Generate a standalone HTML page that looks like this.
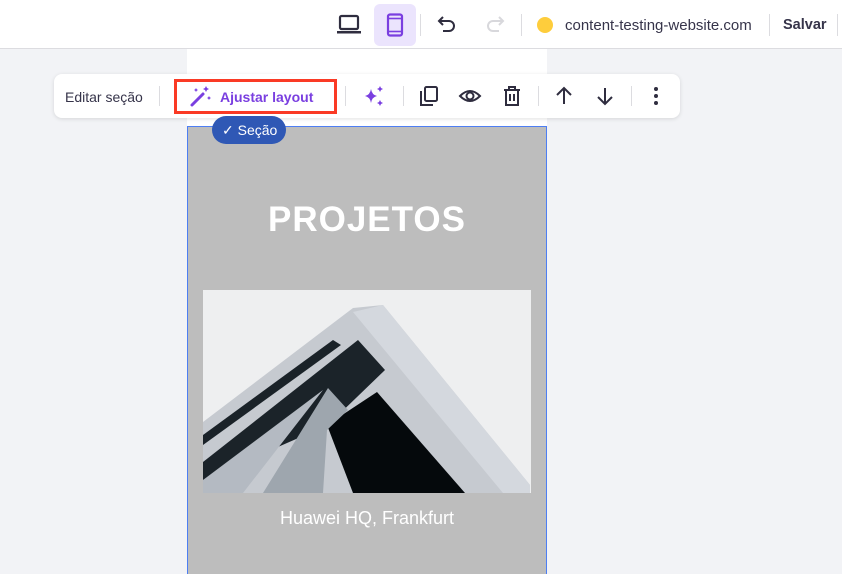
<!DOCTYPE html>
<html><head><meta charset="utf-8"><style>
*{margin:0;padding:0;box-sizing:border-box}
html,body{width:842px;height:574px;overflow:hidden}
body{background:#f2f3f6;font-family:"Liberation Sans",sans-serif;position:relative}
.top{position:absolute;left:0;top:0;width:842px;height:49px;background:#fff;border-bottom:1px solid #dcdce0}
.abs{position:absolute}
.sep{position:absolute;width:1px;background:#dcdce0}
.strip{position:absolute;left:187px;top:49px;width:360px;height:77px;background:#fff}
.section{position:absolute;left:187px;top:126px;width:360px;height:452px;background:#bdbdbd;border:1px solid #4d7ef3}
.tb{position:absolute;left:54px;top:74px;width:626px;height:44px;background:#fff;border-radius:8px;box-shadow:0 1px 4px rgba(0,0,0,.12)}
</style></head><body>
<div class="top">
  <svg class="abs" style="left:336px;top:14px" width="26" height="22" viewBox="0 0 26 22"><rect x="4" y="2" width="18" height="13" rx="1.5" fill="none" stroke="#2f2d3f" stroke-width="2.2"/><rect x="1" y="17" width="24" height="2.5" fill="#2f2d3f"/></svg>
  <div class="abs" style="left:374px;top:4px;width:42px;height:42px;background:#ebe4fd;border-radius:6px"></div>
  <svg class="abs" style="left:386px;top:13px" width="18" height="24" viewBox="0 0 18 24"><rect x="2" y="1.5" width="14" height="21" rx="2" fill="none" stroke="#7a3fe0" stroke-width="2.2"/><line x1="2" y1="5.5" x2="16" y2="5.5" stroke="#7a3fe0" stroke-width="1.6"/><line x1="2" y1="18.5" x2="16" y2="18.5" stroke="#7a3fe0" stroke-width="1.6"/></svg>
  <div class="sep" style="left:420px;top:14px;height:22px"></div>
  <svg class="abs" style="left:437px;top:15px" width="20" height="18" viewBox="0 0 20 18"><path d="M6 2 L2 6 L6 10 M2 6 H12 A5 5 0 0 1 12 16 H6" fill="none" stroke="#2f2d3f" stroke-width="2"/></svg>
  <svg class="abs" style="left:485px;top:15px" width="20" height="18" viewBox="0 0 20 18"><path d="M14 2 L18 6 L14 10 M18 6 H8 A5 5 0 0 0 8 16 H14" fill="none" stroke="#d8d8dc" stroke-width="2"/></svg>
  <div class="sep" style="left:521px;top:14px;height:22px"></div>
  <div class="abs" style="left:537px;top:17px;width:16px;height:16px;border-radius:50%;background:#fecd3c"></div>
  <div class="abs" style="left:565px;top:17px;font-size:15px;color:#36344a">content-testing-website.com</div>
  <div class="sep" style="left:769px;top:14px;height:22px"></div>
  <div class="abs" style="left:783px;top:17px;font-size:14.5px;font-weight:bold;color:#36344a">Salvar</div>
  <div class="sep" style="left:837px;top:14px;height:22px"></div>
</div>
<div class="strip"></div>
<div class="section">
  <div class="abs" style="left:0;top:73px;width:358px;text-align:center;color:#fff;font-weight:bold;font-size:35px;letter-spacing:1px">PROJETOS</div>
  <svg class="abs" style="left:15px;top:163px" width="328" height="203" viewBox="0 0 328 203">
    <rect width="328" height="203" fill="#eeeff0"/>
    <polygon points="150,18 180,15 327,195 327,203 0,203 0,132" fill="#c6cad0"/>
    <polygon points="180,15 327,195 327,203 300,203 150,22" fill="#d4d8de"/>
    <polygon points="0,145 130,50 138,55 0,155" fill="#1a2228"/>
    <polygon points="0,172 155,50 182,80 125,135 0,190" fill="#1b2329"/>
    <polygon points="124,135 174,102 262,203 150,203" fill="#05090c"/>
    <polygon points="60,203 125,98 145,120 124,140 120,203" fill="#9ea6ae"/>
    <polygon points="0,190 120,100 40,203 0,203" fill="#b4bac2"/>
  </svg>
  <div class="abs" style="left:0;top:381px;width:358px;text-align:center;color:#fff;font-size:18px">Huawei HQ, Frankfurt</div>
</div>
<div class="tb">
  <div class="abs" style="left:11px;top:15px;font-size:14px;color:#36344a">Editar seção</div>
  <div class="sep" style="left:105px;top:12px;height:20px"></div>
  <svg class="abs" style="left:135px;top:10px" width="24" height="24" viewBox="0 0 24 24"><line x1="3" y1="21" x2="14" y2="10" stroke="#7a3fe0" stroke-width="3" stroke-linecap="round"/><path d="M17 2 l1 2 2 1 -2 1 -1 2 -1 -2 -2 -1 2 -1z M7 4 l.7 1.3 1.3.7 -1.3.7 -.7 1.3 -.7-1.3 -1.3-.7 1.3-.7z M20 12 l.7 1.3 1.3.7 -1.3.7 -.7 1.3 -.7-1.3 -1.3-.7 1.3-.7z" fill="#7a3fe0"/></svg>
  <div class="abs" style="left:166px;top:15px;font-size:14px;font-weight:bold;color:#7a3fe0">Ajustar layout</div>
  <div class="abs" style="left:120px;top:5px;width:163px;height:35px;border:3px solid #fa3a25"></div>
  <div class="sep" style="left:291px;top:12px;height:20px"></div>
  <svg class="abs" style="left:309px;top:11px" width="22" height="22" viewBox="0 0 22 22"><path d="M8 4 Q9 10 14 11 Q9 12 8 18 Q7 12 2 11 Q7 10 8 4z M17 1 l1 2 2 1 -2 1 -1 2 -1-2 -2-1 2-1z M17 15 l1 2 2 1 -2 1 -1 2 -1-2 -2-1 2-1z" fill="#7a3fe0"/></svg>
  <div class="sep" style="left:349px;top:12px;height:20px"></div>
  <svg class="abs" style="left:364px;top:11px" width="22" height="22" viewBox="0 0 22 22"><rect x="7" y="2" width="12" height="14" rx="1.5" fill="none" stroke="#2f2d3f" stroke-width="2"/><path d="M3 6 V20 H15" fill="none" stroke="#2f2d3f" stroke-width="2"/></svg>
  <svg class="abs" style="left:404px;top:11px" width="24" height="22" viewBox="0 0 24 22"><path d="M2 11 Q12 1 22 11 Q12 21 2 11z" fill="none" stroke="#2f2d3f" stroke-width="2"/><circle cx="12" cy="11" r="3.5" fill="none" stroke="#2f2d3f" stroke-width="2"/></svg>
  <svg class="abs" style="left:448px;top:11px" width="20" height="22" viewBox="0 0 20 22"><path d="M2 5 H18 M7 5 V2 H13 V5 M4 5 V20 H16 V5 M8 9 V16 M12 9 V16" fill="none" stroke="#2f2d3f" stroke-width="2"/></svg>
  <div class="sep" style="left:484px;top:12px;height:20px"></div>
  <svg class="abs" style="left:499px;top:11px" width="22" height="22" viewBox="0 0 22 22"><path d="M11 19 V3 M4 10 L11 3 L18 10" fill="none" stroke="#2f2d3f" stroke-width="2"/></svg>
  <svg class="abs" style="left:540px;top:11px" width="22" height="22" viewBox="0 0 22 22"><path d="M11 3 V19 M4 12 L11 19 L18 12" fill="none" stroke="#2f2d3f" stroke-width="2"/></svg>
  <div class="sep" style="left:577px;top:12px;height:20px"></div>
  <svg class="abs" style="left:598px;top:12px" width="8" height="20" viewBox="0 0 8 20"><circle cx="4" cy="3" r="2" fill="#2f2d3f"/><circle cx="4" cy="10" r="2" fill="#2f2d3f"/><circle cx="4" cy="17" r="2" fill="#2f2d3f"/></svg>
</div>
<div class="abs" style="left:212px;top:116px;width:74px;height:28px;border-radius:14px;background:#2f58b5;color:#fff;font-size:14px;padding:6px 0 0 10px">✓ Seção</div>
</body></html>
